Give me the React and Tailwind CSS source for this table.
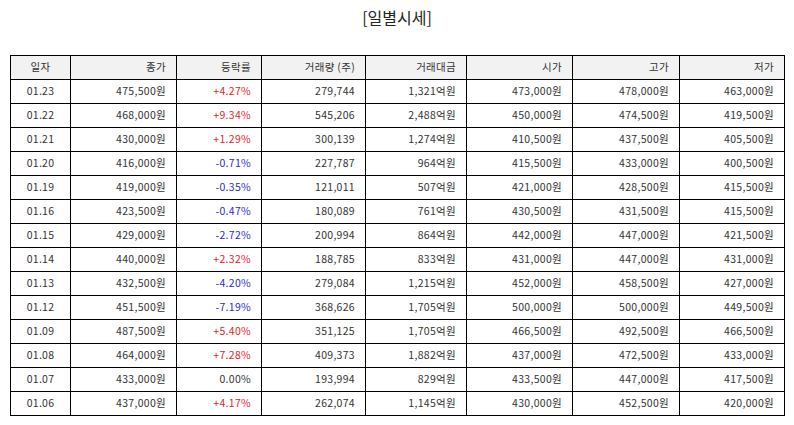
import React from "react";

const rows = [
  ["01.23", "475,500원", "+4.27%", "279,744", "1,321억원", "473,000원", "478,000원", "463,000원"],
  ["01.22", "468,000원", "+9.34%", "545,206", "2,488억원", "450,000원", "474,500원", "419,500원"],
  ["01.21", "430,000원", "+1.29%", "300,139", "1,274억원", "410,500원", "437,500원", "405,500원"],
  ["01.20", "416,000원", "-0.71%", "227,787", "964억원", "415,500원", "433,000원", "400,500원"],
  ["01.19", "419,000원", "-0.35%", "121,011", "507억원", "421,000원", "428,500원", "415,500원"],
  ["01.16", "423,500원", "-0.47%", "180,089", "761억원", "430,500원", "431,500원", "415,500원"],
  ["01.15", "429,000원", "-2.72%", "200,994", "864억원", "442,000원", "447,000원", "421,500원"],
  ["01.14", "440,000원", "+2.32%", "188,785", "833억원", "431,000원", "447,000원", "431,000원"],
  ["01.13", "432,500원", "-4.20%", "279,084", "1,215억원", "452,000원", "458,500원", "427,000원"],
  ["01.12", "451,500원", "-7.19%", "368,626", "1,705억원", "500,000원", "500,000원", "449,500원"],
  ["01.09", "487,500원", "+5.40%", "351,125", "1,705억원", "466,500원", "492,500원", "466,500원"],
  ["01.08", "464,000원", "+7.28%", "409,373", "1,882억원", "437,000원", "472,500원", "433,000원"],
  ["01.07", "433,000원", "0.00%", "193,994", "829억원", "433,500원", "447,000원", "417,500원"],
  ["01.06", "437,000원", "+4.17%", "262,074", "1,145억원", "430,000원", "452,500원", "420,000원"],
];

const headers = ["일자", "종가", "등락률", "거래량 (주)", "거래대금", "시가", "고가", "저가"];
const widths = ["w-[60px]", "w-[106px]", "w-[85px]", "w-[104px]", "w-[101px]", "w-[106px]", "w-[107px]", "w-[105px]"];

function colorFor(v) {
  if (v.startsWith("+")) return "text-[#e0262d]";
  if (v.startsWith("-")) return "text-[#2b2bd0]";
  return "text-[#333333]";
}

export default function App() {
  return (
    <div
      className="w-[794px] h-[425px] bg-white pt-[6px]"
      style={{ fontFamily: '"Noto Sans CJK KR", "Noto Sans", sans-serif' }}
    >
      <div className="text-center text-[16px] leading-[22px] text-[#222]">[일별시세]</div>
      <div className="px-[10px] pt-[27px]">
        <table className="border-collapse table-fixed w-[774px] text-[10.5px] tracking-[0.3px] text-[#333333]">
          <colgroup>
            {widths.map((w, i) => (
              <col key={i} className={w} />
            ))}
          </colgroup>
          <thead>
            <tr className="h-[24px] bg-[#f2f2f2]">
              {headers.map((h, i) => (
                <th
                  key={i}
                  className={`border-[1.5px] border-black font-normal px-[10px] leading-none ${i === 0 ? "text-center" : "text-right"}`}
                >
                  {h}
                </th>
              ))}
            </tr>
          </thead>
          <tbody>
            {rows.map((r, ri) => (
              <tr key={ri} className="h-[24px]">
                {r.map((c, ci) => (
                  <td
                    key={ci}
                    className={`border-[1.5px] border-black px-[10px] leading-none ${ci === 0 ? "text-center" : "text-right"} ${ci === 2 ? colorFor(c) : ""}`}
                  >
                    {c}
                  </td>
                ))}
              </tr>
            ))}
          </tbody>
        </table>
      </div>
    </div>
  );
}
